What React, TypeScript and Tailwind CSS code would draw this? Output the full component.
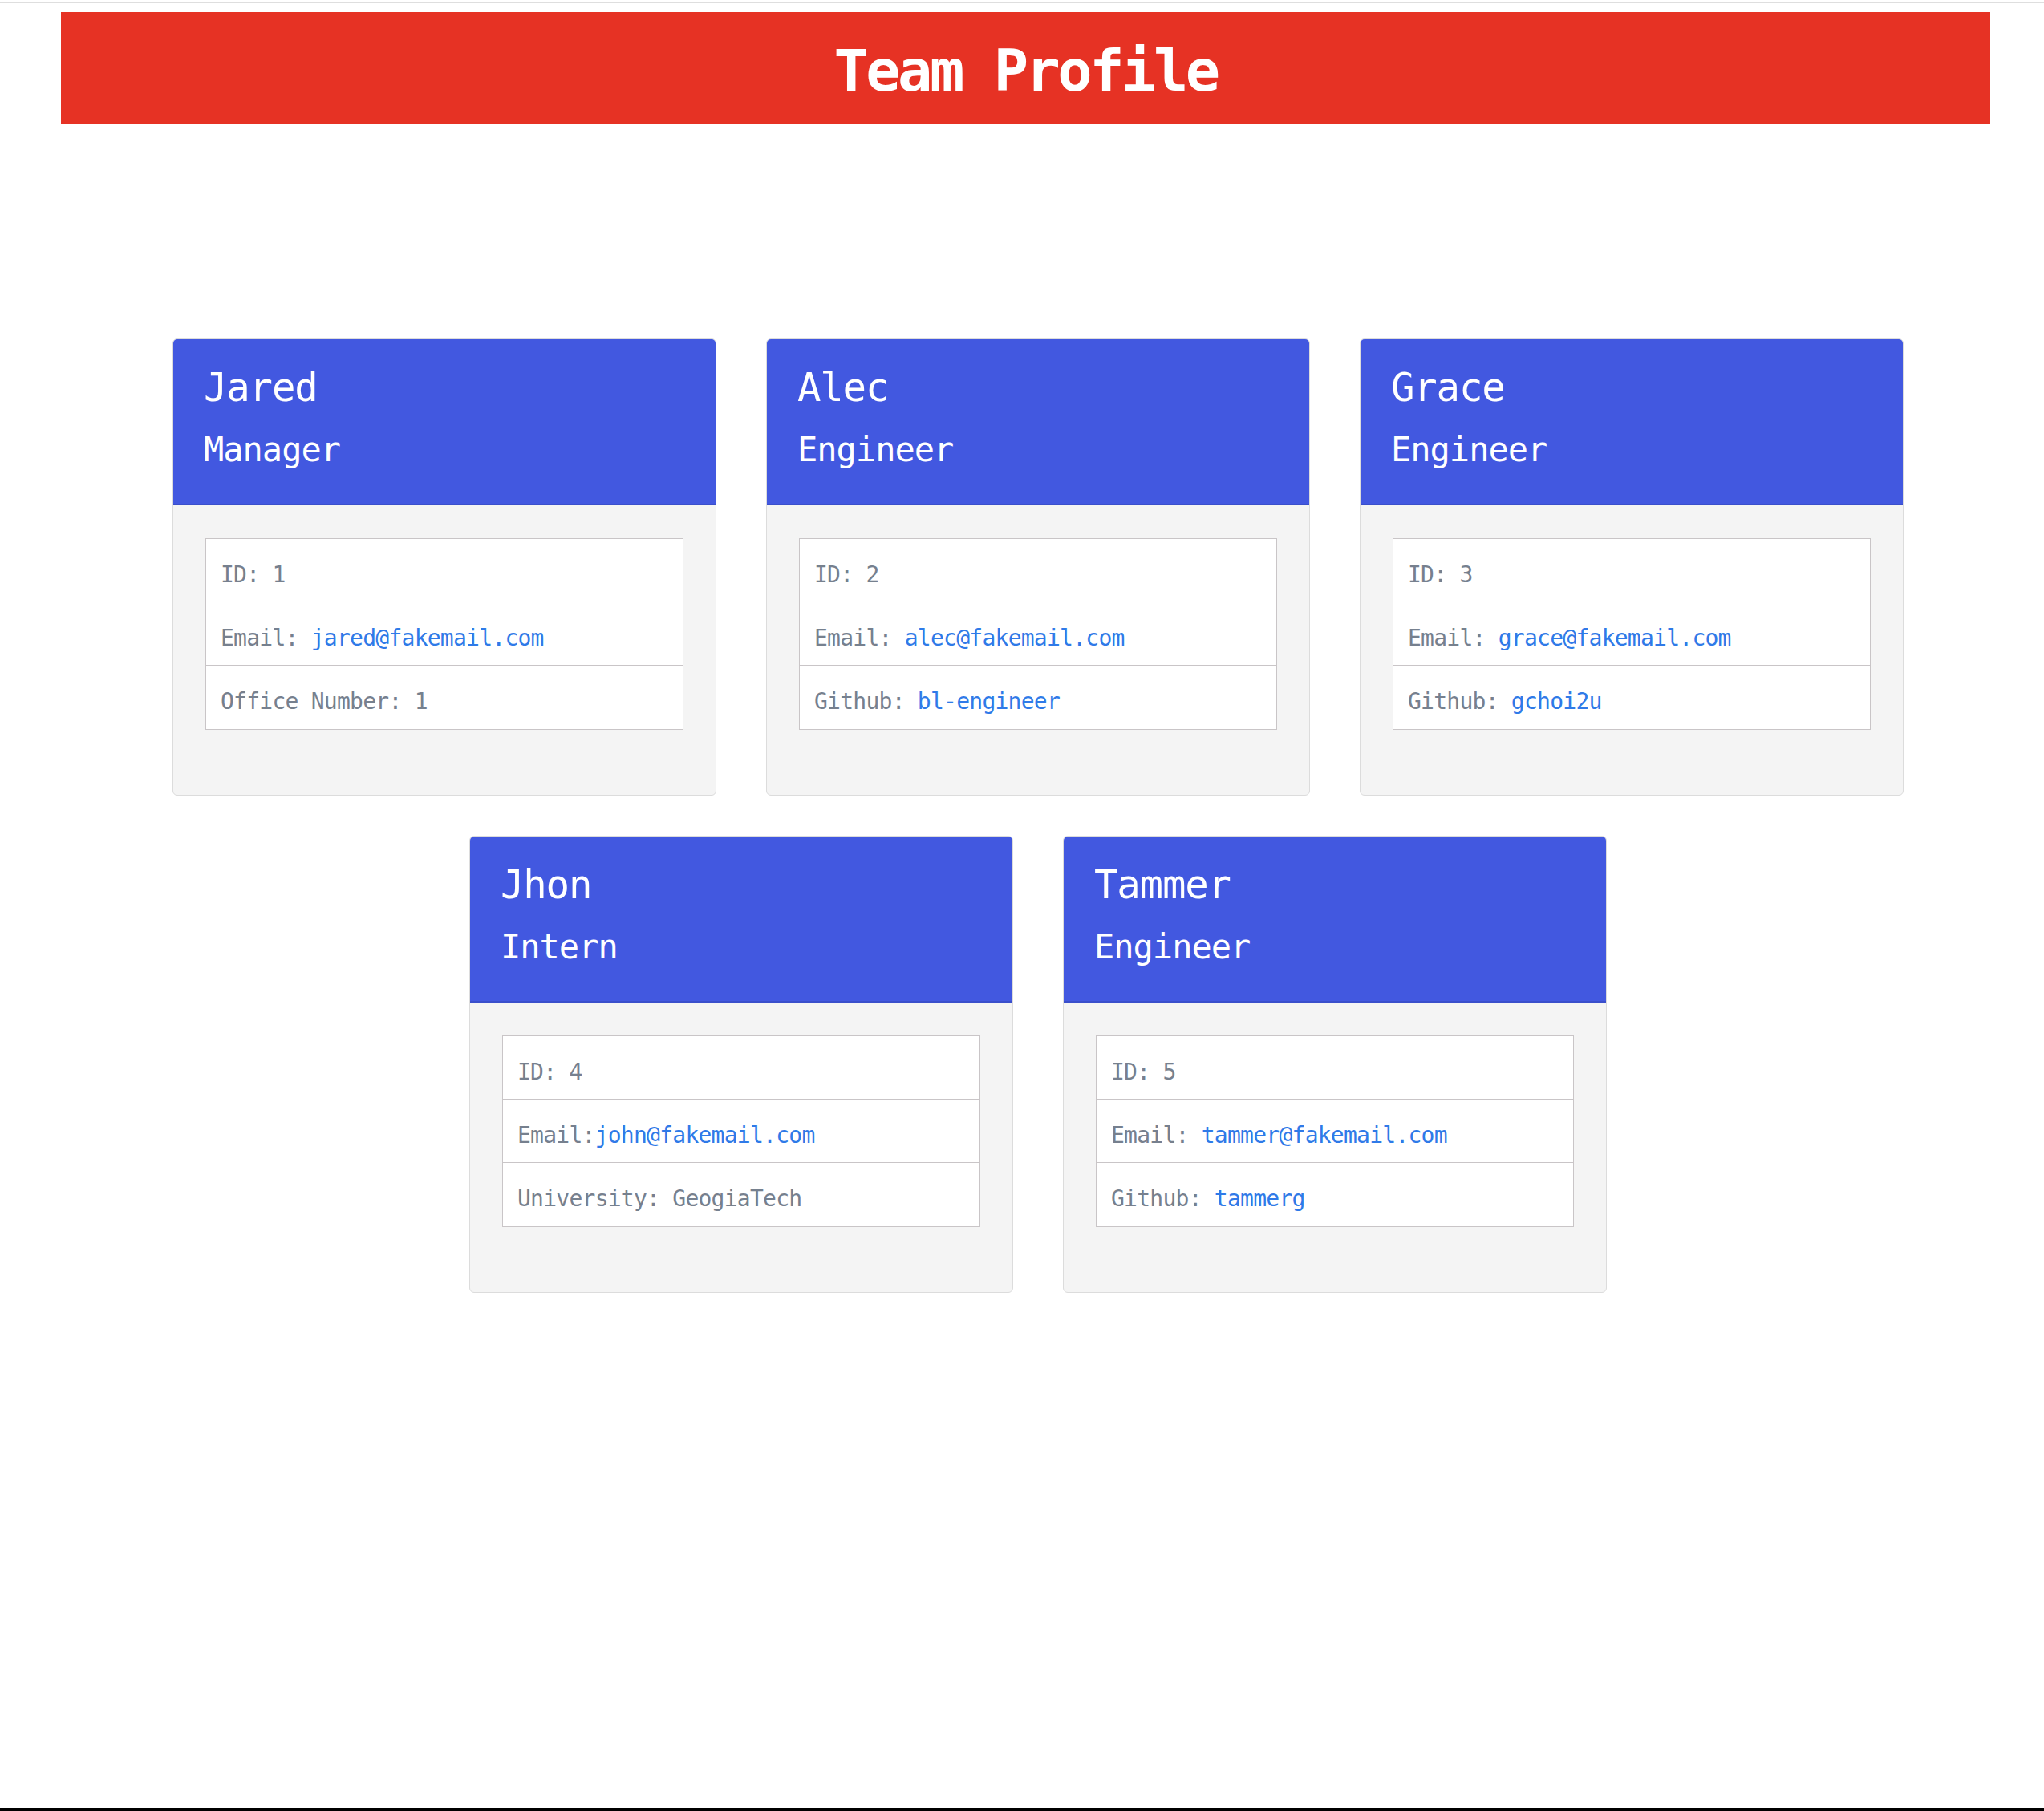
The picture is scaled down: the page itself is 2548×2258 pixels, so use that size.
const TEAM = [
  {
    name: 'Jared',
    role: 'Manager',
    rows: [
      { label: 'ID: ', value: '1' },
      { label: 'Email: ', value: 'jared@fakemail.com', link: true },
      { label: 'Office Number: ', value: '1' }
    ]
  },
  {
    name: 'Alec',
    role: 'Engineer',
    rows: [
      { label: 'ID: ', value: '2' },
      { label: 'Email: ', value: 'alec@fakemail.com', link: true },
      { label: 'Github: ', value: 'bl-engineer', link: true }
    ]
  },
  {
    name: 'Grace',
    role: 'Engineer',
    rows: [
      { label: 'ID: ', value: '3' },
      { label: 'Email: ', value: 'grace@fakemail.com', link: true },
      { label: 'Github: ', value: 'gchoi2u', link: true }
    ]
  },
  {
    name: 'Jhon',
    role: 'Intern',
    rows: [
      { label: 'ID: ', value: '4' },
      { label: 'Email:', value: 'john@fakemail.com', link: true },
      { label: 'University: ', value: 'GeogiaTech' }
    ]
  },
  {
    name: 'Tammer',
    role: 'Engineer',
    rows: [
      { label: 'ID: ', value: '5' },
      { label: 'Email: ', value: 'tammer@fakemail.com', link: true },
      { label: 'Github: ', value: 'tammerg', link: true }
    ]
  }
]

type Member = (typeof TEAM)[number]

const Card = ({ member }: { member: Member }) => {
  return (
    <div className="w-[678px] overflow-hidden rounded-[6px] border border-[#dcdcdc] bg-[#f4f4f4]">
      <div className="border-b-2 border-[#3a4fcb] bg-[#4258e0] px-[38px] pt-[31px] pb-[42px] text-white">
        <h2 className="mb-[22px] text-[49px] leading-[60px] tracking-[-1.2px]">{member.name}</h2>
        <h3 className="text-[42px] leading-[50px] tracking-[-1px]">{member.role}</h3>
      </div>
      <div className="px-[40px] pt-[41px] pb-[81px]">
        <ul className="divide-y divide-[#c9c5c7] border border-[#c9c5c7] bg-white">
          {member.rows.map((row) => {
            return (
              <li
                key={row.label}
                className="h-[79px] whitespace-pre px-[18px] pt-[10px] text-[28px] leading-[69px] tracking-[-0.75px] text-[#76808e]"
              >
                {row.label}
                {row.link ? (
                  <a className="text-[#2f7ae8]">{row.value}</a>
                ) : (
                  row.value
                )}
              </li>
            )
          })}
        </ul>
      </div>
    </div>
  )
}

export default function App() {
  return (
    <div className="flex min-h-[2258px] flex-col bg-white font-['DejaVu_Sans_Mono',monospace]">
      <div className="mt-[2px] h-[2px] bg-[#dedede]" />
      <header className="mt-[11px] ml-[76px] mr-[67px] h-[139px] bg-[#e63224] pt-[8px] text-center">
        <h1 className="text-[72px] font-bold leading-[131px] tracking-[-3.5px] text-white">
          Team Profile
        </h1>
      </header>
      <main className="mt-[268px] flex flex-wrap justify-center gap-x-[62px] gap-y-[50px] pl-[40px]">
        <div className="flex w-full justify-center gap-[62px]">
          {TEAM.slice(0, 3).map((m) => (
            <Card key={m.name} member={m} />
          ))}
        </div>
        <div className="flex w-full justify-center gap-[62px]">
          {TEAM.slice(3).map((m) => (
            <Card key={m.name} member={m} />
          ))}
        </div>
      </main>
      <div className="mt-auto h-[4px] bg-black" />
    </div>
  )
}
